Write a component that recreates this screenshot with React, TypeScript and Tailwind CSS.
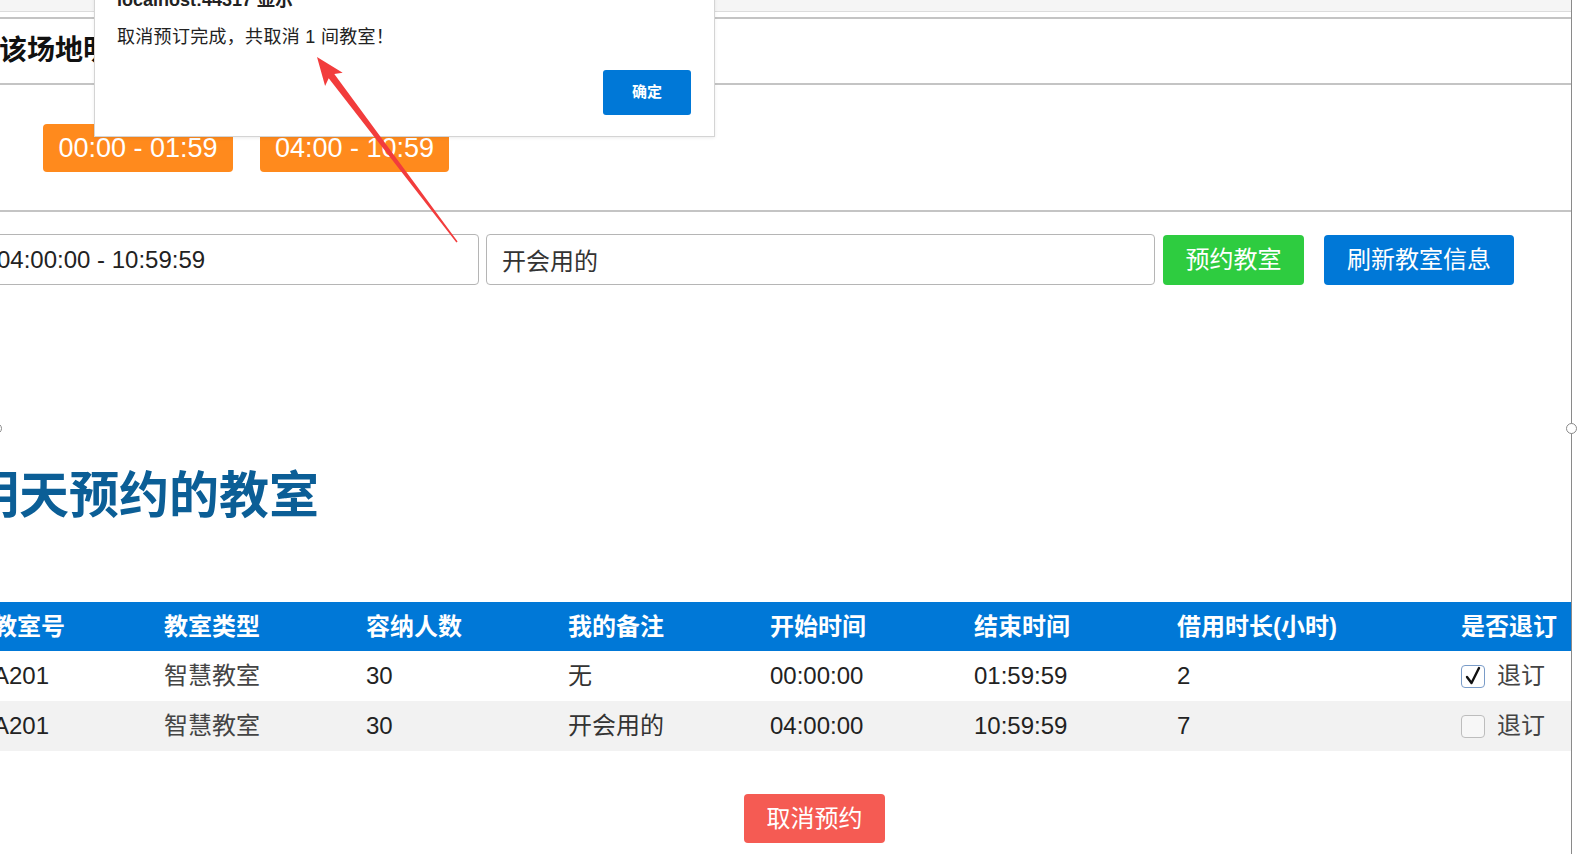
import React from "react";

const FONT = '"Liberation Sans", "Noto Sans CJK SC", sans-serif';

const cols = "grid grid-cols-[171px_202px_202px_202px_204px_203px_284px_122px]";

function CheckBox({ checked }: { checked: boolean }) {
  return (
    <span
      className={
        checked
          ? "flex h-[23px] w-[24px] items-center justify-center rounded-[4px] border border-[#7a9cc8] bg-white"
          : "flex h-[23px] w-[24px] items-center justify-center rounded-[4px] border border-[#bdbdbd] bg-[#f7f7f7]"
      }
    >
      {checked && (
        <svg width="18" height="20" viewBox="0 0 18 20">
          <path d="M3 11 L7.5 17 L15 2" fill="none" stroke="#111" strokeWidth="2.4" strokeLinecap="round" strokeLinejoin="round" />
        </svg>
      )}
    </span>
  );
}

const rows = [
  { no: "A201", type: "智慧教室", cap: "30", note: "无", start: "00:00:00", end: "01:59:59", dur: "2", checked: true },
  { no: "A201", type: "智慧教室", cap: "30", note: "开会用的", start: "04:00:00", end: "10:59:59", dur: "7", checked: false },
];

export default function App() {
  return (
    <div className="relative h-[854px] w-[1578px] overflow-hidden bg-white" style={{ fontFamily: FONT }}>
      <div className="flex w-[1571px] flex-col">
        {/* top strip */}
        <div className="h-[12px] border-b border-[#dcdcdc] bg-[#f5f5f5]" />
        <div className="h-[5px]" />
        <div className="h-[2px] bg-[#c4c4c4]" />
        {/* header */}
        <div className="flex h-[64px] items-center">
          <h2 className="ml-[-1px] text-[28px] font-bold leading-none text-[#111]">该场地明天已被预约的时间段</h2>
        </div>
        <div className="h-[2px] bg-[#c4c4c4]" />
        {/* time badges */}
        <div className="flex h-[125px] items-start gap-[27px] pl-[43px] pt-[39px]">
          <span className="flex h-[48px] w-[190px] items-center justify-center rounded-[4px] bg-[#ff8a1d] text-[27px] text-white">
            00:00 - 01:59
          </span>
          <span className="flex h-[48px] w-[189px] items-center justify-center rounded-[4px] bg-[#ff8a1d] text-[27px] text-white">
            04:00 - 10:59
          </span>
        </div>
        <div className="h-[2px] bg-[#c4c4c4]" />
        {/* inputs row */}
        <div className="mt-[22px] flex h-[51px] items-center">
          <input
            readOnly
            defaultValue="04:00:00 - 10:59:59"
            className="ml-[-20px] h-[51px] w-[499px] rounded-[4px] border border-[#b5b5b5] bg-white pl-[16px] text-[24px] text-[#222] outline-none"
          />
          <input
            readOnly
            defaultValue="开会用的"
            className="ml-[7px] h-[51px] w-[669px] rounded-[4px] border border-[#b5b5b5] bg-white pl-[15px] text-[24px] text-[#333] outline-none"
          />
          <button className="ml-[8px] flex h-[50px] w-[141px] items-center justify-center rounded-[4px] bg-[#2ecc40] text-[24px] text-white">
            预约教室
          </button>
          <button className="ml-[20px] flex h-[50px] w-[190px] items-center justify-center rounded-[4px] bg-[#0078d7] text-[24px] text-white">
            刷新教室信息
          </button>
        </div>
        {/* heading */}
        <h1 className="ml-[-31px] mt-[186px] text-[50px] font-bold leading-[50px] text-[#0b5e96]">明天预约的教室</h1>
        {/* table */}
        <div className="ml-[-19px] mt-[81px] flex w-[1590px] flex-col">
          <div className={`${cols} h-[49px] items-center bg-[#0078d7] text-[24px] font-bold text-white`}>
            {["教室号", "教室类型", "容纳人数", "我的备注", "开始时间", "结束时间", "借用时长(小时)", "是否退订"].map((h) => (
              <div key={h} className="pl-[12px] whitespace-nowrap">
                {h}
              </div>
            ))}
          </div>
          {rows.map((r, i) => (
            <div
              key={i}
              className={`${cols} h-[50px] items-center text-[24px] text-[#222] ${i === 1 ? "bg-[#f2f2f2]" : "bg-white"}`}
            >
              <div className="pl-[12px]">{r.no}</div>
              <div className="pl-[12px] text-[#444]">{r.type}</div>
              <div className="pl-[12px]">{r.cap}</div>
              <div className="pl-[12px] text-[#333]">{r.note}</div>
              <div className="pl-[12px]">{r.start}</div>
              <div className="pl-[12px]">{r.end}</div>
              <div className="pl-[12px]">{r.dur}</div>
              <div className="flex items-center gap-[12px] pl-[12px] text-[#444]">
                <CheckBox checked={r.checked} />
                <span>退订</span>
              </div>
            </div>
          ))}
        </div>
        <button className="ml-[744px] mt-[43px] flex h-[49px] w-[141px] items-center justify-center rounded-[4px] bg-[#f55b53] text-[24px] text-white">
          取消预约
        </button>
      </div>

      {/* selection frame */}
      <div className="absolute bottom-0 left-[1571px] top-0 w-px bg-[#8a8a8a]" />
      <div className="absolute left-[1566px] top-[423px] h-[11px] w-[11px] rounded-full border-[1.5px] border-[#8a8a8a] bg-white" />
      <div className="absolute left-[-9px] top-[423px] h-[11px] w-[11px] rounded-full border-[1.5px] border-[#8a8a8a] bg-white" />

      {/* alert dialog */}
      <div className="absolute left-[94px] top-[-40px] flex w-[621px] flex-col border border-[#d4d4d4] bg-white pb-[21px] pl-[22px] pr-[23px] pt-[30px] shadow-[0_1px_3px_rgba(0,0,0,0.08)]">
        <div className="text-[18px] font-bold leading-[18px] text-[#222]">localhost:44317 显示</div>
        <div className="mt-[17px] text-[18px] leading-[22px] tracking-[0.3px] text-[#222]">取消预订完成，共取消 1 间教室！</div>
        <div className="mt-[22px] flex justify-end">
          <button className="flex h-[45px] w-[88px] items-center justify-center rounded-[3px] bg-[#0078d7] text-[15px] font-bold text-white">
            确定
          </button>
        </div>
      </div>

      {/* red annotation arrow */}
      <svg className="pointer-events-none absolute left-0 top-0" width="1578" height="854">
        <polygon
          points="317,57 342.7,72.7 334.3,74 457.6,241.5 456.4,242.5 328.7,78.2 325.1,85.9"
          fill="#f23c3c"
        />
      </svg>
    </div>
  );
}
